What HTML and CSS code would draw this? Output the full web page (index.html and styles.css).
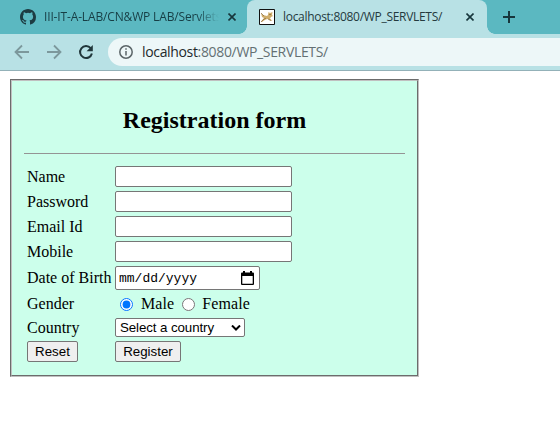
FILE: index.html
```html
<!DOCTYPE html>
<html lang="en">
<head>
<meta charset="utf-8">
<title>Registration form</title>
<link rel="stylesheet" href="styles.css">
</head>
<body>
<header class="browser">
  <div class="tabs">
    <div class="tab">
      <svg class="favicon" viewBox="0 0 16 16"><path fill="#1d3c43" d="M8 0C3.58 0 0 3.58 0 8c0 3.54 2.29 6.53 5.47 7.59.4.07.55-.17.55-.38 0-.19-.01-.82-.01-1.49-2.01.37-2.53-.49-2.69-.94-.09-.23-.48-.94-.82-1.13-.28-.15-.68-.52-.01-.53.63-.01 1.08.58 1.23.82.72 1.21 1.87.87 2.33.66.07-.52.28-.87.51-1.07-1.78-.2-3.64-.89-3.64-3.95 0-.87.31-1.59.82-2.15-.08-.2-.36-1.02.08-2.12 0 0 .67-.21 2.2.82a7.6 7.6 0 0 1 4 0c1.53-1.04 2.2-.82 2.2-.82.44 1.1.16 1.92.08 2.12.51.56.82 1.27.82 2.15 0 3.07-1.87 3.75-3.65 3.95.29.25.54.73.54 1.48 0 1.07-.01 1.93-.01 2.2 0 .21.15.46.55.38A8 8 0 0 0 16 8c0-4.42-3.58-8-8-8z"/></svg>
      <span class="tab-title faded">III-IT-A-LAB/CN&amp;WP LAB/Servlets</span>
      <svg class="close" viewBox="0 0 8 8"><path d="M.5.5l7 7M7.500.5l-7 7"/></svg>
    </div>
    <div class="tab active">
      <svg class="favicon" viewBox="0 0 16 16"><path fill="#fff" stroke="#111" d="M.5.5h15v15H.5z"/><path fill="#d0ae6c" d="M2 4l2 2 4 1 1-1 .5-3L11 4l2.500-1-.5 3 1 1-2 1-1 1.500 2.500 2.500-2.500-.5-2-1.500-2.500.5L3 13l-1-.5L5 9 3 8z"/><path fill="none" stroke="#86683c" stroke-width=".7" d="M2 13l3-3 2-.5M10 5l1 1 1-1M9 10l3 1.500M2 4l3 3"/></svg>
      <span class="tab-title">localhost:8080/WP_SERVLETS/</span>
      <svg class="close" viewBox="0 0 8 8"><path d="M.5.5l7 7M7.500.5l-7 7"/></svg>
    </div>
    <svg class="plus" viewBox="0 0 12 12"><path d="M6 0v12M0 6h12"/></svg>
  </div>
  <div class="toolbar">
    <svg class="nav" viewBox="0 0 16 16"><path d="M15 8H2M8 1.500L1.500 8 8 14.500"/></svg>
    <svg class="nav" viewBox="0 0 16 16"><path d="M1 8h13M8 1.500L14.500 8 8 14.500"/></svg>
    <svg class="nav reload" viewBox="0 0 16 16"><path d="M12.700 4.200A6 6 0 1 0 13.900 9.500"/><path class="head" d="M14.800 1v6.200H8.600z"/></svg>
    <div class="address">
      <svg class="info" viewBox="0 0 14 14"><circle cx="7" cy="7" r="6.200"/><path d="M7 6v4.500M7 3.300v1.500"/></svg>
      <span class="url"><b>localhost</b>:8080/WP_SERVLETS/</span>
    </div>
  </div>
</header>
<main>
  <form class="panel">
    <h2>Registration form</h2>
    <hr>
    <div class="fields">
      <label for="name">Name</label><input class="text" id="name">
      <label for="password">Password</label><input class="text" id="password" type="password">
      <label for="email">Email Id</label><input class="text" id="email">
      <label for="mobile">Mobile</label><input class="text" id="mobile">
      <span>Date of Birth</span>
      <div class="date"><span>mm/dd/yyyy</span>
        <svg class="calendar" viewBox="0 0 13 14"><path fill-rule="evenodd" d="M2 0h2v1.500h5V0h2v1.500h1a1 1 0 0 1 1 1V13a1 1 0 0 1-1 1H1a1 1 0 0 1-1-1V2.500a1 1 0 0 1 1-1h1zM1.300 5v7.700h10.400V5z"/></svg>
      </div>
      <span>Gender</span>
      <div class="radios"><input type="radio" name="gender" id="male" checked><label for="male">Male</label><input type="radio" name="gender" id="female"><label for="female">Female</label></div>
      <span>Country</span>
      <div class="select">Select a country<svg viewBox="0 0 10 6"><path d="M1 .5l4 4 4-4"/></svg></div>
      <button class="reset" type="reset">Reset</button>
      <button class="register" type="button">Register</button>
    </div>
  </form>
</main>
</body>
</html>
```
FILE: styles.css
```css
* { box-sizing: border-box; }
body { margin: 0; background: #fff; color: #000; font: 16px/18px "Liberation Serif", serif; overflow: hidden; }
svg { display: block; flex: none; }
.browser { height: 71px; background: #b8e1e5; border-bottom: 1px solid #93b1b8; font-family: "Open Sans", "Noto Sans", sans-serif; }
.tabs { height: 34px; background: #5bb8c1; display: flex; align-items: center; }
.tab { height: 34px; width: 247px; padding-left: 20px; display: flex; align-items: center; color: #173e45; }
.tab.active { width: 240px; padding-left: 12px; background: #b8e1e5; border-radius: 8px 8px 0 0; color: #243a3e; position: relative; }
.tab.active::before, .tab.active::after { content: ""; position: absolute; bottom: 0; width: 8px; height: 8px; }
.tab.active::before { left: -8px; background: radial-gradient(circle at 0 0, #5bb8c1 7.500px, #b8e1e5 8px); }
.tab.active::after { right: -8px; background: radial-gradient(circle at 100% 0, #5bb8c1 7.500px, #b8e1e5 8px); }
.favicon { width: 16px; height: 16px; }
.tab-title { margin-left: 8px; width: 175px; font-size: 12px; letter-spacing: -.3px; white-space: nowrap; overflow: hidden; }
.faded { letter-spacing: -.15px; -webkit-mask-image: linear-gradient(90deg, #000 87%, transparent); mask-image: linear-gradient(90deg, #000 87%, transparent); }
.close { width: 8px; height: 8px; margin-left: 9px; fill: none; stroke: #17363c; stroke-width: 1.600; }
.active .tab-title { width: 169px; }
.active .close { margin-left: 14px; }
.plus { width: 12px; height: 12px; margin-left: 16px; fill: none; stroke: #17363c; stroke-width: 2; }
.toolbar { height: 36px; padding-left: 14px; display: flex; align-items: center; gap: 16px; }
.nav { width: 16px; height: 16px; fill: none; stroke: #7c989c; stroke-width: 1.800; }
.nav.reload { stroke: #20363a; stroke-width: 2; }
.nav .head { fill: #20363a; stroke: none; }
.address { flex: 1; height: 28px; margin-left: -2px; padding-left: 11px; border-radius: 14px 0 0 14px; background: #edf7f8; display: flex; align-items: center; }
.info { width: 14px; height: 14px; fill: none; stroke: #5b6568; stroke-width: 1.500; }
.url { margin-left: 9px; font-size: 14px; letter-spacing: -.34px; color: #647073; }
.url b { font-weight: 400; color: #22292b; }
main { padding: 8px 10px; }
.panel { width: 409px; height: 298px; padding: 0 12px; border: 2px groove #c0c0c0; background: #ccffeb; }
h2 { margin: 26px 0 19px; font-size: 24px; line-height: 27px; text-align: center; }
hr { margin: 0 0 12px; border: 0; height: 1px; background: #949494; }
.fields { padding-left: 3px; display: grid; grid-template-columns: 88px 1fr; grid-template-rows: 21px 21px 21px 21px 24px 20px 19px 21px; row-gap: 4px; align-items: center; }
.text { width: 177px; height: 21px; margin: 0; padding: 1px 2px; border: 1px solid #767676; border-radius: 2px; background: #fff; }
.date { width: 145px; height: 24px; padding: 0 5px 0 3px; display: flex; align-items: center; border: 1px solid #767676; border-radius: 2px; background: #fff; font: 13px "Liberation Mono", monospace; }
.calendar { width: 13px; height: 14px; margin-left: auto; }
.radios { display: flex; align-items: center; }
.radios input { width: 13px; height: 13px; margin: 0 8px 0 5px; }
.radios label { letter-spacing: .1px; }
.radios label + input { margin: 0 7px 0 8px; }
.select { width: 130px; height: 19px; padding: 0 3px 0 4px; display: flex; align-items: center; justify-content: space-between; border: 1px solid #767676; border-radius: 2px; background: #fff; font: 13.333px "Liberation Sans", sans-serif; letter-spacing: -.1px; }
.select svg { width: 10px; height: 6px; fill: none; stroke: #000; stroke-width: 2; }
button { height: 21px; padding: 0; border: 1px solid #767676; border-radius: 2px; background: #efefef; color: #000; font: 13.333px "Liberation Sans", sans-serif; }
.reset { width: 51px; }
.register { width: 66px; }
```
